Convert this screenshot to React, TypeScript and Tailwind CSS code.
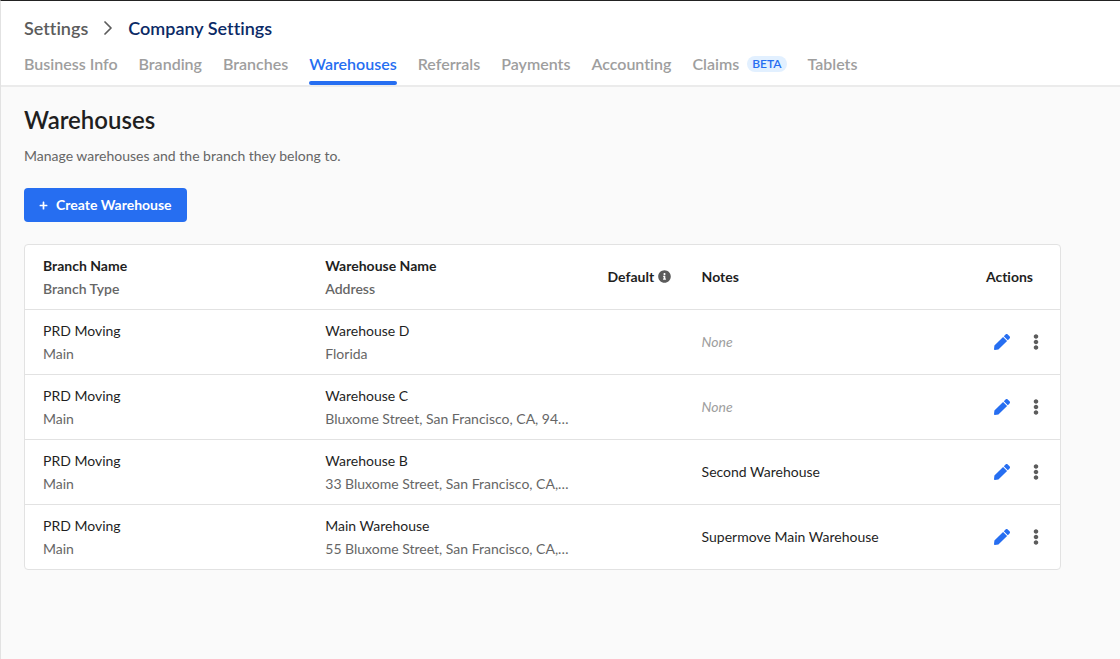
import React from 'react';
import { ChevronRight } from 'lucide-react';
import { FaEllipsisV, FaInfoCircle, FaPen, FaPlus } from 'react-icons/fa';

interface Warehouse {
  id: number;
  branch: string;
  branchType: string;
  name: string;
  address: string;
  notes?: string;
}

const TABS = [
  { label: 'Business Info' },
  { label: 'Branding' },
  { label: 'Branches' },
  { label: 'Warehouses' },
  { label: 'Referrals' },
  { label: 'Payments' },
  { label: 'Accounting' },
  { label: 'Claims', badge: 'BETA' },
  { label: 'Tablets' },
];

const WAREHOUSES: Warehouse[] = [
  { id: 1, branch: 'PRD Moving', branchType: 'Main', name: 'Warehouse D', address: 'Florida' },
  { id: 2, branch: 'PRD Moving', branchType: 'Main', name: 'Warehouse C', address: 'Bluxome Street, San Francisco, CA, 94…' },
  { id: 3, branch: 'PRD Moving', branchType: 'Main', name: 'Warehouse B', address: '33 Bluxome Street, San Francisco, CA,…', notes: 'Second Warehouse' },
  { id: 4, branch: 'PRD Moving', branchType: 'Main', name: 'Main Warehouse', address: '55 Bluxome Street, San Francisco, CA,…', notes: 'Supermove Main Warehouse' },
];

const Header: React.FC = () => (
  <header className="bg-white border-b-2 border-[#ebebeb] px-[23px] pt-[15px]">
    <nav aria-label="Breadcrumb" className="flex items-center gap-2 text-lg leading-6 font-semibold">
      <a href="#settings" className="text-[#5c5c5c]">Settings</a>
      <ChevronRight className="w-6 h-6 text-[#5c5c5c]" strokeWidth={1.75} />
      <a href="#company" className="text-[#0b2a66]">Company Settings</a>
    </nav>
    <nav aria-label="Company settings" className="flex gap-[21px] mt-3 text-base leading-6 font-semibold">
      {TABS.map((tab) => {
        const active = tab.label === 'Warehouses';
        return (
          <a
            key={tab.label}
            href={`#${tab.label}`}
            aria-current={active ? 'page' : undefined}
            className={`flex flex-col gap-[5px] whitespace-nowrap ${active ? 'text-[#266ef1]' : 'text-[#9e9e9e]'}`}
          >
            <span className="flex items-center gap-2">
              {tab.label}
              {tab.badge && (
                <span className="rounded-full bg-[#e2f0ff] px-[5px] text-xs leading-4 text-[#266ef1]">{tab.badge}</span>
              )}
            </span>
            <span className={`h-1 rounded-full ${active ? 'bg-[#266ef1]' : ''}`} />
          </a>
        );
      })}
    </nav>
  </header>
);

const WarehouseRow: React.FC<{ warehouse: Warehouse }> = ({ warehouse }) => (
  <tr className="h-[65px] border-t border-[#e2e2e2]">
    <td className="pl-[18px] pr-4">
      <div className="truncate">{warehouse.branch}</div>
      <div className="truncate text-[#666666]">{warehouse.branchType}</div>
    </td>
    <td className="pl-[18px] pr-4">
      <div className="truncate">{warehouse.name}</div>
      <div className="truncate text-[#666666]">{warehouse.address}</div>
    </td>
    <td />
    <td className="pl-[18px]">
      {warehouse.notes ? warehouse.notes : <span className="italic text-[#9e9e9e]">None</span>}
    </td>
    <td className="pl-5">
      <div className="flex items-center gap-[18px] pl-2">
        <button type="button" aria-label="Edit warehouse" className="text-[#266ef1]">
          <FaPen className="w-4 h-4" />
        </button>
        <button type="button" aria-label="More actions" className="text-[#5c5c5c]">
          <FaEllipsisV className="w-4 h-4" />
        </button>
      </div>
    </td>
  </tr>
);

const App: React.FC = () => {
  return (
    <div className="min-h-screen bg-[#fafafa] border-t border-t-[#222222] border-l border-l-[#e2e2e2] font-['Lato','Liberation_Sans',sans-serif] [font-variant-ligatures:none] text-[#1f1f1f]">
      <Header />

      <main className="pl-[23px] pr-[59px] pt-[15px] pb-8">
        <h1 className="text-2xl leading-9 font-semibold">Warehouses</h1>
        <p className="mt-2 text-sm leading-5 text-[#666666]">Manage warehouses and the branch they belong to.</p>
        <button
          type="button"
          className="mt-[22px] flex items-center gap-2 h-[34px] px-[15px] rounded bg-[#266ef1] text-sm font-bold text-white"
        >
          <FaPlus className="w-[9px] h-[9px]" />
          Create Warehouse
        </button>

        <div className="mt-[22px] rounded border border-[#e2e2e2] bg-white">
          <table className="w-full table-fixed text-left text-sm leading-[23px]">
            <colgroup>
              <col className="w-3/11" />
              <col className="w-3/11" />
              <col className="w-1/11" />
              <col className="w-3/11" />
              <col className="w-1/11" />
            </colgroup>
            <thead>
              <tr className="h-16">
                <th className="pl-[18px] font-bold">
                  Branch Name
                  <div className="font-semibold text-[#666666]">Branch Type</div>
                </th>
                <th className="pl-[18px] font-bold">
                  Warehouse Name
                  <div className="font-semibold text-[#666666]">Address</div>
                </th>
                <th className="pl-[18px] font-bold">
                  <div className="flex items-center gap-1">
                    Default
                    <FaInfoCircle className="w-[13px] h-[13px] shrink-0 text-[#5c5c5c]" />
                  </div>
                </th>
                <th className="pl-[18px] font-bold">Notes</th>
                <th className="pl-5 font-bold">Actions</th>
              </tr>
            </thead>
            <tbody>
              {WAREHOUSES.map((warehouse) => (
                <WarehouseRow key={warehouse.id} warehouse={warehouse} />
              ))}
            </tbody>
          </table>
        </div>
      </main>
    </div>
  );
};

export default App;
